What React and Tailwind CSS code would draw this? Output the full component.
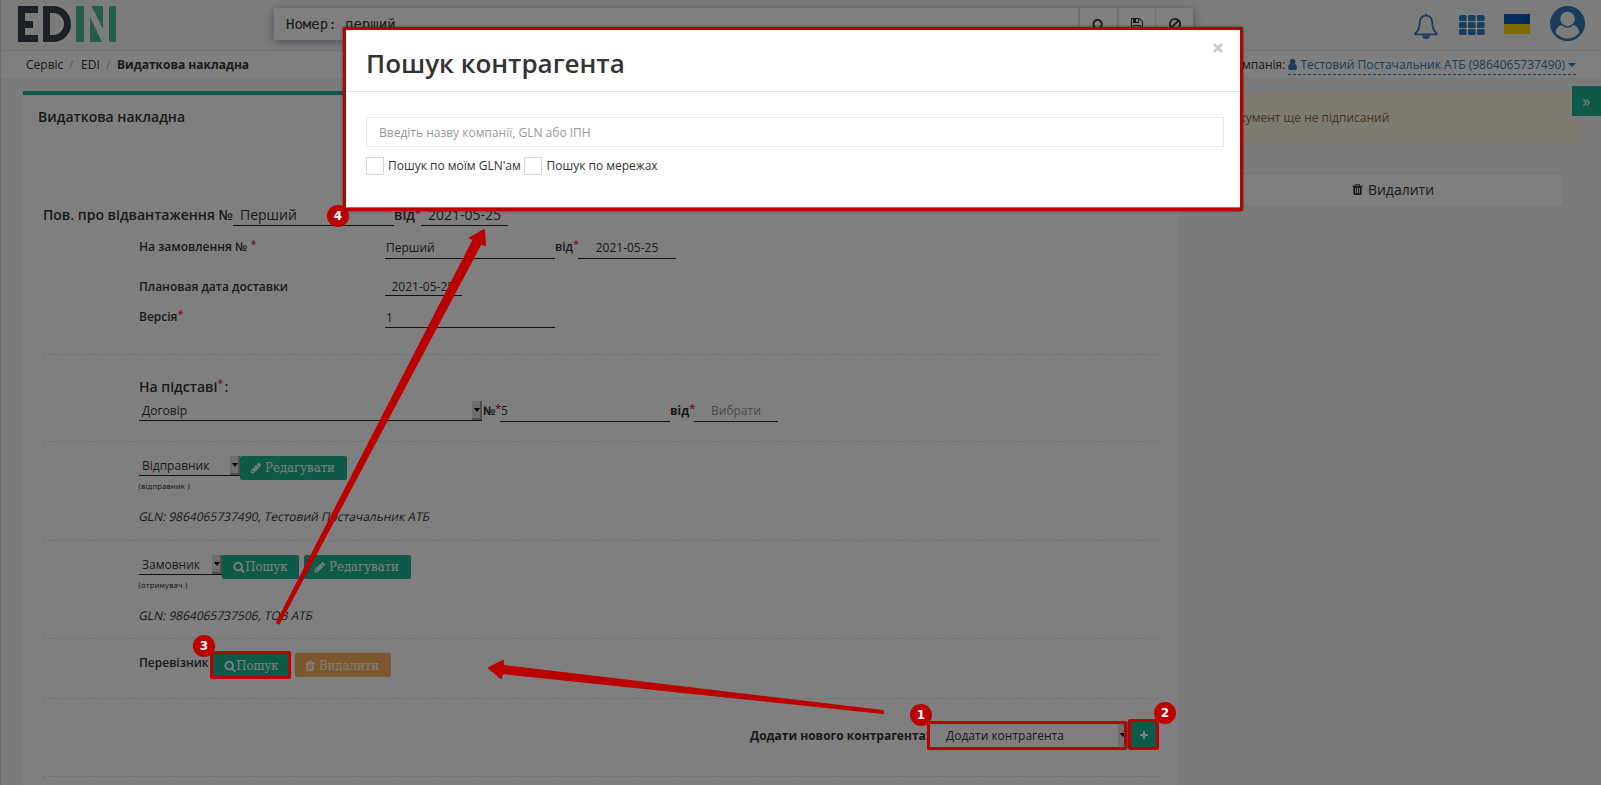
import React from "react";

const PATHS = {
  search:
    "M1216 832q0-185-131.5-316.5t-316.5-131.5-316.5 131.5-131.5 316.5 131.5 316.5 316.5 131.5 316.5-131.5 131.5-316.5zm512 832q0 52-38 90t-90 38q-54 0-90-38l-343-342q-179 124-399 124-143 0-273.5-55.5t-225-150-150-225-55.5-273.5 55.5-273.5 150-225 225-150 273.5-55.5 273.5 55.5 225 150 150 225 55.5 273.5q0 220-124 399l343 343q37 37 37 90z",
  trash:
    "M704 1376v-704q0-14-9-23t-23-9h-64q-14 0-23 9t-9 23v704q0 14 9 23t23 9h64q14 0 23-9t9-23zm256 0v-704q0-14-9-23t-23-9h-64q-14 0-23 9t-9 23v704q0 14 9 23t23 9h64q14 0 23-9t9-23zm256 0v-704q0-14-9-23t-23-9h-64q-14 0-23 9t-9 23v704q0 14 9 23t23 9h64q14 0 23-9t9-23zm-544-992h448l-48-117q-7-9-17-11h-317q-10 2-17 11zm928 32v64q0 14-9 23t-23 9h-96v948q0 83-47 143.5t-113 60.5h-832q-66 0-113-58.5t-47-141.5v-952h-96q-14 0-23-9t-9-23v-64q0-14 9-23t23-9h309l70-167q15-37 54-63t79-26h320q40 0 79 26t54 63l70 167h309q14 0 23 9t9 23z",
  pencil:
    "M491 1536l91-91-235-235-91 91v107h128v128h107zm523-928q0-22-22-22-10 0-17 7l-542 542q-7 7-7 17 0 22 22 22 10 0 17-7l542-542q7-7 7-17zm-54-192l416 416-832 832h-416v-416zm683 96q0 53-37 90l-166 166-416-416 166-165q36-38 90-38 53 0 91 38l235 234q37 39 37 91z",
  ban: "M1440 893q0-161-87-295l-754 753q137 89 297 89 111 0 211.5-43.5t173.5-116.5 116-174.5 43-212.5zm-999 299l755-754q-135-91-300-91-148 0-273 73t-198 199-73 274q0 162 89 299zm1223-299q0 157-61 300t-163.5 246-245 164-298.5 61-298.5-61-245-164-163.5-246-61-300 61-299.5 163.5-245.5 245-164 298.5-61 298.5 61 245 164 163.5 245.5 61 299.5z",
  save: "M512 1536h768v-384h-768v384zm896 0h128v-896q0-14-10-38.5t-20-34.5l-281-281q-10-10-34-20t-39-10v416q0 40-28 68t-68 28h-576q-40 0-68-28t-28-68v-416h-128v1280h128v-416q0-40 28-68t68-28h832q40 0 68 28t28 68v416zm-384-928v-320q0-13-9.5-22.5t-22.5-9.5h-192q-13 0-22.5 9.5t-9.5 22.5v320q0 13 9.5 22.5t22.5 9.5h192q13 0 22.5-9.5t9.5-22.5zm640 32v928q0 40-28 68t-68 28h-1344q-40 0-68-28t-28-68v-1344q0-40 28-68t68-28h928q40 0 88 20t76 48l280 280q28 28 48 76t20 88z",
};

function Icon({ name, className }) {
  return (
    <svg viewBox="0 0 1792 1792" fill="currentColor" className={`shrink-0 ${className}`}>
      <path d={PATHS[name]} />
    </svg>
  );
}

function Logo() {
  return (
    <div className="flex h-9 items-stretch">
      <div className="flex w-5 flex-col justify-between border-l-[7px] border-[#3a424f]">
        <div className="h-[7px] bg-[#3a424f]" />
        <div className="h-[7px] w-2 bg-[#3a424f]" />
        <div className="h-[7px] bg-[#3a424f]" />
      </div>
      <div className="ml-[5px] w-7 rounded-r-[18px] border-[7px] border-[#3a424f]" />
      <svg viewBox="0 0 41 36" className="ml-[5px] h-9 w-[41px]" fill="#4bbd91">
        <rect x="0" y="0" width="8" height="36" />
        <polygon points="14,11 26,36 14,36" />
        <polygon points="15.5,0 27,0 27,23" />
        <rect x="33" y="0" width="7" height="36" />
      </svg>
    </div>
  );
}

function Star({ className = "" }) {
  return <span className={`relative -top-[3px] text-[11px] text-[#e8305c] ${className}`}>*</span>;
}

function Line({ className }) {
  return <div className={`h-px w-[1116px] border-t border-dashed border-[#e1e4e6] ${className}`} />;
}

function Arrow({ className = "" }) {
  return (
    <span className={`flex shrink-0 items-center justify-end border-b-2 border-r-2 border-[#a0a0a0] bg-[#dedede] ${className}`}>
      <span className="h-0 w-0 border-x-[3.5px] border-t-4 border-x-transparent border-t-black" />
    </span>
  );
}

function Btn({ icon, children, className }) {
  return (
    <span
      className={`flex h-6 shrink-0 items-center justify-center rounded-[2px] font-['DejaVu_Serif_Condensed','DejaVu_Serif',serif] text-[13px] text-white ${className}`}
    >
      <Icon name={icon} className="h-3 w-3" />
      {children}
    </span>
  );
}

function Party({ children }) {
  return (
    <div className="ml-24 mt-[14px] flex h-[22px] leading-[22px]">
      <span className="-skew-x-12">{children}</span>
    </div>
  );
}

function Badge({ children, className }) {
  return (
    <div
      className={`absolute flex h-[22px] w-[22px] items-center justify-center rounded-full bg-[#bb0000] font-['DejaVu_Sans',sans-serif] text-[12px] font-bold text-white ${className}`}
    >
      {children}
    </div>
  );
}

function Header() {
  return (
    <header className="flex h-[51px] items-start border-b border-[#e7eaec] bg-[#f8f8f9] pl-[17px]">
      <div className="mt-[6px] w-[256px]">
        <Logo />
      </div>
      <div className="mt-2 flex h-8 w-[919px] bg-white font-['DejaVu_Sans_Mono',monospace] text-[14px] text-[#333] shadow-[0_2px_9px_rgba(60,60,90,0.45)]">
        <div className="flex w-[804px] items-center whitespace-pre pl-3">Номер: перший</div>
        <div className="flex w-[39px] items-center justify-center border-l-2 border-[#e0e0e2]">
          <Icon name="search" className="h-[13px] w-[13px]" />
        </div>
        <div className="flex w-[38px] items-center justify-center border-l-2 border-[#e0e0e2]">
          <Icon name="save" className="h-[14px] w-[14px]" />
        </div>
        <div className="flex w-[38px] items-center justify-center border-l border-[#e0e0e2]">
          <Icon name="ban" className="h-[14px] w-[14px]" />
        </div>
      </div>
      <svg viewBox="0 0 24 26" className="ml-[221px] mt-[13px] h-[26px] w-6 shrink-0" fill="none" stroke="#337ab7" strokeWidth="1.8">
        <path d="M12 2.6C8 2.6 6 5.6 5.8 9.4C5.6 14.5 5 17.6 1.4 20.2V21.4H22.6V20.2C19 17.6 18.4 14.5 18.2 9.4C18 5.6 16 2.6 12 2.6Z" />
        <path d="M12 3V.6" />
        <path d="M8.2 22.2A3.8 3.8 0 0 0 15.8 22.2Z" fill="#337ab7" stroke="none" />
      </svg>
      <svg viewBox="0 0 26 20" className="ml-[21px] mt-[15px] h-5 w-[26px] shrink-0" fill="#337ab7">
        {[0, 9, 18].map((x) =>
          [0, 7, 14].map((y) => <rect key={`${x}-${y}`} x={x} y={y} width="7.6" height="6" rx="1.5" />)
        )}
      </svg>
      <div className="ml-[19px] mt-[14px] h-5 w-[26px] shrink-0 border-b-[10px] border-[#ffd500] bg-[#005bbb]" />
      <svg viewBox="0 0 36 36" className="ml-5 mt-[6px] h-[35px] w-[35px] shrink-0">
        <circle cx="18" cy="18" r="18" fill="#337ab7" />
        <circle cx="18" cy="13.3" r="7.5" fill="#f8f8f9" />
        <path d="M5.8 27.5C6.5 21.8 9.5 19.6 12.2 19.7Q18 25.2 23.8 19.7C26.5 19.6 29.5 21.8 30.2 27.5Q25.5 33.4 18 33.4T5.8 27.5Z" fill="#f8f8f9" />
      </svg>
    </header>
  );
}

function Crumbs() {
  return (
    <nav className="flex h-7 items-center border-b border-[#e7eaec] bg-white pl-[25px] pr-[25px] text-[12px] text-[#333]">
      <span className="w-[43px]">Сервіс</span>
      <span className="w-3 text-[#bbb]">/</span>
      <span className="w-[25px]">EDI</span>
      <span className="w-[11px] text-[#bbb]">/</span>
      <b>Видаткова накладна</b>
      <span className="ml-auto pr-[3px]">Компанія:</span>
      <span className="mt-px flex h-[19px] items-center border-b border-dashed border-[#337ab7] text-[#337ab7]">
        <svg viewBox="0 0 8 10" className="mr-[3px] h-[11px] w-[9px]" fill="currentColor">
          <circle cx="4" cy="2.6" r="2.6" />
          <path d="M0 8.5C0 6 .6 4.6 2 4.4Q4 6 6 4.4C7.4 4.6 8 6 8 8.5Q8 10 6.6 10H1.4Q0 10 0 8.5Z" />
        </svg>
        Тестовий Постачальник АТБ (9864065737490)
        <span className="ml-[3px] h-0 w-0 border-x-4 border-t-4 border-x-transparent border-t-[#337ab7]" />
      </span>
    </nav>
  );
}

function Form() {
  return (
    <section className="h-[694px] w-[1156px] shrink-0 overflow-hidden border-t-4 border-[#1ab394] bg-white pl-5 text-[12px] text-[#333]">
      <h5 className="-ml-[5px] mt-3 h-5 text-[14px] font-semibold leading-5">Видаткова накладна</h5>
      <div className="mt-[77px] flex h-[22px] text-[14px] leading-[22px]">
        <span className="w-[190px] font-semibold">Пов. про відвантаження №</span>
        <span className="w-[161px] border-b border-[#222] pl-[7px]">Перший</span>
        <span className="w-[27px] font-semibold">
          від<Star />
        </span>
        <span className="w-[87px] border-b border-[#222] pl-[7px]">2021-05-25</span>
      </div>
      <div className="ml-24 mt-[11px] flex h-[22px] leading-[22px]">
        <span className="w-[246px] font-semibold leading-5">
          На замовлення № <Star />
        </span>
        <span className="w-[170px] border-b border-[#222] pl-px">Перший</span>
        <span className="w-[23px] font-semibold leading-5">
          від<Star />
        </span>
        <span className="w-[98px] border-b border-[#222] text-center">2021-05-25</span>
      </div>
      <div className="ml-24 mt-[19px] flex h-[18px] leading-[18px]">
        <span className="w-[246px] font-semibold">Плановая дата доставки</span>
        <span className="w-[77px] border-b border-[#222] pl-[6.5px]">2021-05-25</span>
      </div>
      <div className="ml-24 mt-[10px] flex h-[22px] leading-[22px]">
        <span className="w-[246px] font-semibold">
          Версія<Star />
        </span>
        <span className="w-[170px] border-b border-[#222] pl-px leading-6">1</span>
      </div>
      <Line className="mt-[26px]" />
      <div className="ml-24 mt-[22px] h-5 text-[14px] font-semibold leading-5">
        На підставі<Star className="-top-[5px] mr-px" />:
      </div>
      <div className="ml-24 mt-1 flex h-[21px] leading-5">
        <span className="flex h-5 w-[343px] border-b border-[#222]">
          <span className="w-[333px] pl-[3px]">Договір</span>
          <Arrow className="h-[19px] w-[10px]" />
        </span>
        <span className="w-[18px] pl-px font-bold">
          №<Star />
        </span>
        <span className="w-[170px] border-b border-[#222] pl-px">5</span>
        <span className="w-6 font-bold">
          від<Star />
        </span>
        <span className="w-[84px] border-b border-[#222] text-center text-[#999]">Вибрати</span>
      </div>
      <Line className="mt-[19px]" />
      <div className="ml-24 mt-[14px] flex h-6 items-start">
        <span className="flex h-5 w-[101px] border-b border-[#222] leading-5">
          <span className="w-[91px] pl-[3px]">Відправник</span>
          <Arrow className="h-[19px] w-[10px]" />
        </span>
        <Btn icon="pencil" className="w-[107px] gap-[3px] bg-[#1ab394] pr-[2px]">Редагувати</Btn>
      </div>
      <div className="-ml-px mt-[2px] h-[10px] pl-24 font-['DejaVu_Sans',sans-serif] text-[7.4px] leading-[10px]">(відправник )</div>
      <Party>GLN: 9864065737490, Тестовий Постачальник АТБ</Party>
      <Line className="mt-3" />
      <div className="ml-24 mt-[14px] flex h-6 items-start">
        <span className="flex h-5 w-[83px] border-b border-[#222] leading-5">
          <span className="w-[73px] pl-[3px]">Замовник</span>
          <Arrow className="h-[19px] w-[10px]" />
        </span>
        <Btn icon="search" className="w-[77px] bg-[#1ab394]">Пошук</Btn>
        <Btn icon="pencil" className="ml-[5px] w-[107px] gap-[3px] bg-[#1ab394] pr-[2px]">Редагувати</Btn>
      </div>
      <div className="-ml-px mt-[2px] h-[10px] pl-24 font-['DejaVu_Sans',sans-serif] text-[7.4px] leading-[10px]">(отримувач )</div>
      <Party>GLN: 9864065737506, ТОВ АТБ</Party>
      <Line className="mt-[11px]" />
      <div className="ml-24 mt-[14px] flex h-6 items-start">
        <span className="w-[73px] font-semibold leading-5">Перевізник</span>
        <Btn icon="search" className="w-[77px] bg-[#1ab394] pl-[2px] pt-[2px]">Пошук</Btn>
        <Btn icon="trash" className="ml-[6px] w-24 gap-[3px] bg-[#f8ac59] pr-[3px] pt-[2px]">Видалити</Btn>
      </div>
      <Line className="mt-[21px]" />
      <div className="ml-[707px] mt-[23px] flex h-[27px] leading-[27px]">
        <span className="w-[177px] font-bold">Додати нового контрагента:</span>
        <span className="w-[191px] border-b border-[#222] pl-[19px]">Додати контрагента</span>
        <Arrow className="h-[27px] w-[10px]" />
        <span className="ml-[2px] flex w-7 items-center justify-center bg-[#1ab394]">
          <svg viewBox="0 0 8 8" className="mb-px h-2 w-2" stroke="#fff" strokeWidth="2">
            <path d="M4 0V8M0 4H8" />
          </svg>
        </span>
      </div>
      <Line className="mt-[27px]" />
    </section>
  );
}

function Aside() {
  return (
    <aside className="flex flex-1 flex-col pl-5 pr-[22px] pt-[2px] text-[#333]">
      <div className="flex h-[50px] items-center rounded-[3px] border border-[#faebcc] bg-[#fcf8e3] pl-6 text-[12px] text-[#8a6d3b]">
        Документ ще не підписаний
      </div>
      <div className="ml-[22px] mr-[15px] mt-[30px] flex h-[34px] items-center justify-center gap-1 rounded-[2px] border border-[#e7eaec] bg-white pb-px text-[14px]">
        <Icon name="trash" className="h-[13px] w-[13px]" />
        Видалити
      </div>
    </aside>
  );
}

function Modal() {
  return (
    <div className="absolute left-[343px] top-[27px] h-[184px] w-[900px] rounded-[2px] border-[3px] border-[#bb0000] bg-white text-[#333] shadow-[0_0_3px_rgba(0,0,0,0.6),inset_0_-1px_0_#808080]">
      <div className="flex h-[62px] items-start justify-between border-b border-[#e5e5e5] pl-5 pr-[17px]">
        <h4 className="mt-[15px] text-[26px] font-semibold leading-9">Пошук контрагента</h4>
        <svg viewBox="0 0 10 10" className="mt-[13px] h-[10px] w-[10px]" stroke="#ccc" strokeWidth="2.6">
          <path d="M1 1L9 9M9 1L1 9" />
        </svg>
      </div>
      <div className="ml-5 mt-[25px] flex h-[30px] w-[858px] items-center border border-[#e5e6e7] pl-3 pt-[2px] text-[12px] text-[#999]">
        Введіть назву компанії, GLN або ІПН
      </div>
      <div className="ml-5 mt-[10px] flex h-[18px] items-center text-[12px]">
        <span className="h-[18px] w-[18px] border border-[#d9d5d0]" />
        <span className="w-[140px] pl-1">Пошук по моїм GLN'ам</span>
        <span className="h-[18px] w-[18px] border border-[#d9d5d0]" />
        <span className="pl-[4.5px]">Пошук по мережах</span>
      </div>
    </div>
  );
}

export default function App() {
  return (
    <div className="relative h-[785px] w-[1601px] overflow-hidden whitespace-nowrap font-['Open_Sans','Noto_Sans',sans-serif]">
      <div className="h-full border-l border-[#d8dadc] bg-[#f6f6f7]">
        <Header />
        <Crumbs />
        <main className="mt-3 flex pl-[22px]">
          <Form />
          <Aside />
        </main>
      </div>
      <div className="absolute right-0 top-[86px] flex h-[30px] w-[29px] items-center justify-center bg-[#1ab394]">
        <svg viewBox="0 0 8 8" className="mt-[2px] h-[7px] w-[7px]" fill="none" stroke="#fff" strokeWidth="1.4">
          <path d="M.5 .5L3.8 4L.5 7.5M4 .5L7.3 4L4 7.5" />
        </svg>
      </div>
      <div className="absolute left-0 top-0 h-[785px] w-[1601px] bg-black/50">
        <Modal />
        <div className="absolute left-[210px] top-[651px] h-7 w-[81px] rounded-[2px] border-[3px] border-[#bb0000]" />
        <div className="absolute left-[927px] top-[721px] h-[29px] w-[200px] rounded-[2px] border-[3px] border-[#bb0000]" />
        <div className="absolute left-[1128px] top-[719px] h-[31px] w-[31px] rounded-[2px] border-[3px] border-[#bb0000]" />
        <svg className="absolute left-0 top-0 h-[785px] w-[1601px]" fill="#bb0000" stroke="#bb0000" strokeWidth="2" strokeLinejoin="round">
          <polygon points="484,230 485,245 481,243 279,623.5 277,622.5 474,239 470,238" />
          <polygon points="489,668 503,661 503,666 883,711 883,713 502,673 501,678" />
        </svg>
        <Badge className="left-[910px] top-[704px]">1</Badge>
        <Badge className="left-[1154px] top-[702px]">2</Badge>
        <Badge className="left-[193px] top-[635px]">3</Badge>
        <Badge className="left-[327px] top-[205px]">4</Badge>
      </div>
    </div>
  );
}
